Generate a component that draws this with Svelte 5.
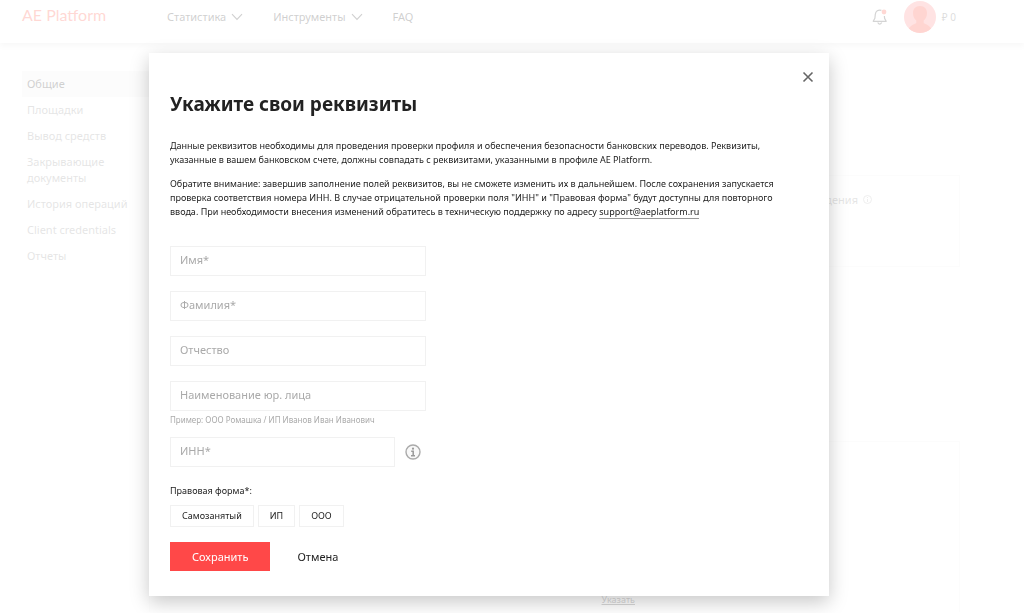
<script>
	let open = true;
	let form = '';

	const menu = ['Статистика', 'Инструменты'];

	const sections = [
		'Общие',
		'Площадки',
		'Вывод средств',
		'Закрывающие документы',
		'История операций',
		'Client credentials',
		'Отчеты'
	];

	const fields = [
		{ id: 'name', label: 'Имя*' },
		{ id: 'surname', label: 'Фамилия*' },
		{ id: 'patronymic', label: 'Отчество' },
		{ id: 'company', label: 'Наименование юр. лица', hint: 'Пример: ООО Ромашка / ИП Иванов Иван Иванович' }
	];

	const forms = ['Самозанятый', 'ИП', 'ООО'];

	const close = () => {
		open = false;
	}
</script>

<header class="top">
	<a class="logo" href="#home">AE Platform</a>
	<nav class="menu">
		{#each menu as item (item)}
			<a href="#menu">
				{item}
				<svg width="12" height="8" viewBox="0 0 12 8"><path d="M1 1.2 6 6.4 11 1.2" fill="none" stroke="currentColor" stroke-width="1.1" /></svg>
			</a>
		{/each}
		<a href="#faq">FAQ</a>
	</nav>
	<div class="user">
		<button class="bell" aria-label="Уведомления">
			<svg width="16" height="18" viewBox="0 0 16 18">
				<path d="M9.4 2.3C6.2 1.4 3.6 3.2 3.3 6.4L2.900 10.200 1.200 13.300H14.200L12.600 10.400 12.400 8" fill="none" stroke="#555" stroke-width="1.200" stroke-linejoin="round" />
				<path d="M5.700 14.500Q7.700 17.600 9.700 14.500" fill="none" stroke="#555" stroke-width="1.300" />
				<circle cx="12" cy="4" r="2.400" fill="#ff6655" />
			</svg>
		</button>
		<svg class="avatar" width="32" height="32" viewBox="0 0 32 32">
			<circle cx="16" cy="16" r="16" fill="#ff9090" />
			<path d="M16 5c4.600 0 7 3 7 7 0 3.600-1.400 6-3.300 7.500v2.300c0 1.200 5.600 1.800 7.400 5.800A16 16 0 0 1 16 32 16 16 0 0 1 4.900 27.600c1.800-4 7.400-4.600 7.400-5.800v-2.300C10.400 18 9 15.600 9 12c0-4 2.400-7 7-7z" fill="#ff5a4a" />
		</svg>
		<span class="balance">₽ 0</span>
	</div>
</header>

<div class="page">
	<aside>
		{#each sections as item, i (item)}
			<a class:active={i === 0} href="#section">{item}</a>
		{/each}
	</aside>
	<main>
		<section class="card">
			<span>Способ подтверждения</span>
			<svg width="9" height="9" viewBox="0 0 9 9"><circle cx="4.500" cy="4.500" r="4" fill="none" stroke="#bbb" /><path d="M4.500 2v1M4.500 4v3" stroke="#bbb" /></svg>
		</section>
		<section class="card details">
			<a href="#details">Указать</a>
		</section>
	</main>
</div>

{#if open}
	<div class="overlay">
		<div class="modal" role="dialog" aria-modal="true" aria-labelledby="title">
			<button class="close" aria-label="Закрыть" on:click={close}>
				<svg width="12" height="12" viewBox="0 0 12 12"><path d="M1.500 1.500 10.500 10.500M10.500 1.500 1.500 10.500" stroke="#666" stroke-width="1.600" /></svg>
			</button>
			<h1 id="title">Укажите свои реквизиты</h1>
			<p>Данные реквизитов необходимы для проведения проверки профиля и обеспечения безопасности банковских переводов. Реквизиты, указанные в вашем банковском счете, должны совпадать с реквизитами, указанными в профиле AE Platform.</p>
			<p>Обратите внимание: завершив заполнение полей реквизитов, вы не сможете изменить их в дальнейшем. После сохранения запускается проверка соответствия номера ИНН. В случае отрицательной проверки поля "ИНН" и "Правовая форма" будут доступны для повторного ввода. При необходимости внесения изменений обратитесь в техническую поддержку по адресу <a href="mailto:support@aeplatform.ru">support@aeplatform.ru</a></p>

			<form on:submit|preventDefault={close}>
				{#each fields as field (field.id)}
					<div class="field">
						<input id={field.id} type="text" placeholder={field.label} aria-label={field.label} />
						{#if field.hint}
							<small>{field.hint}</small>
						{/if}
					</div>
				{/each}
				<div class="field inn">
					<input id="inn" type="text" placeholder="ИНН*" aria-label="ИНН*" />
					<button class="info" type="button" aria-label="Подсказка">
						<svg width="16" height="16" viewBox="0 0 16 16">
							<circle cx="8" cy="8" r="7" fill="#f8f8f8" stroke="#aaa" stroke-width="1.400" />
							<circle cx="8" cy="4.700" r="1.100" fill="#999" />
							<path d="M6.200 7.200H8.200V11.600M6 11.700H10" fill="none" stroke="#999" stroke-width="1.500" />
						</svg>
					</button>
				</div>

				<fieldset>
					<legend>Правовая форма*:</legend>
					<div class="forms">
						{#each forms as item (item)}
							<label class:checked={form === item}>
								<input type="radio" name="form" value={item} bind:group={form} />
								{item}
							</label>
						{/each}
					</div>
				</fieldset>

				<div class="actions">
					<button class="save" type="submit">Сохранить</button>
					<button class="cancel" type="button" on:click={close}>Отмена</button>
				</div>
			</form>
		</div>
	</div>
{/if}

<style>
	:global(body) {
		font-family: "Noto Sans", "Open Sans", sans-serif;
		font-size: 11px;
		color: #222;
		background: #fff;
	}
	a {
		color: inherit;
		text-decoration: none;
	}
	button {
		font: inherit;
		color: inherit;
		padding: 0;
		border: 0;
		background: none;
		cursor: pointer;
	}
	svg {
		display: block;
	}
	.top {
		display: flex;
		align-items: center;
		height: 33px;
		padding: 0 68px 10px 22px;
		box-shadow: 0 3px 6px rgba(0, 0, 0, 0.12);
		color: #444;
	}
	.logo {
		width: 145px;
		font-family: Lato, sans-serif;
		font-size: 16px;
		line-height: 20px;
		padding-bottom: 4px;
		color: #f65;
	}
	.menu {
		display: flex;
		gap: 30px;
	}
	.menu a {
		display: flex;
		align-items: center;
		gap: 5px;
	}
	.user {
		display: flex;
		align-items: center;
		margin-left: auto;
	}
	.avatar {
		margin: 0 6px 0 16px;
	}
	.balance {
		font-size: 10px;
		color: #777;
	}
	.page {
		display: flex;
		padding-top: 28px;
	}
	aside {
		width: 149px;
		padding-left: 22px;
		box-sizing: border-box;
	}
	aside a {
		display: block;
		padding: 5px 20px 5px 5px;
		line-height: 16px;
		color: #999;
	}
	aside .active {
		color: #444;
		background: #f2f2f2;
	}
	main {
		flex: 1;
		margin-right: 64px;
		padding-top: 104px;
	}
	.card {
		display: flex;
		align-items: flex-start;
		justify-content: flex-end;
		gap: 5px;
		min-height: 74px;
		padding: 16px 87px 0 0;
		border: 1px solid #f4f4f4;
		line-height: 16px;
		color: #999;
	}
	.card svg {
		margin-top: 3px;
	}
	.details {
		margin-top: 174px;
		padding: 150px 324px 0 0;
		min-height: 20px;
		border-bottom: 0;
		font-size: 9px;
	}
	.details a {
		text-decoration: underline;
		color: #666;
	}
	.overlay {
		position: fixed;
		inset: 0;
		display: flex;
		justify-content: center;
		align-items: flex-start;
		padding: 53px 46px 0 0;
		background: rgba(255, 255, 255, 0.75);
	}
	.modal {
		position: relative;
		width: 100%;
		max-width: 680px;
		box-sizing: border-box;
		padding: 36px 21px 25px;
		background: #fff;
		box-shadow: 0 6px 18px rgba(0, 0, 0, 0.22);
	}
	.close {
		position: absolute;
		top: 18px;
		right: 15px;
	}
	h1 {
		margin: 0 0 20px;
		font-size: 19px;
		line-height: 30px;
	}
	p {
		max-width: 620px;
		margin: 0 0 10px;
		font-size: 9px;
		line-height: 14px;
	}
	p a {
		border-bottom: 1px solid #999;
	}
	form {
		margin-top: 27px;
	}
	.field {
		max-width: 256px;
		margin-bottom: 15px;
	}
	.field input {
		display: block;
		width: 100%;
		height: 30px;
		box-sizing: border-box;
		padding: 0 9px 4px;
		border: 1px solid #f1f1f1;
		border-radius: 0;
		font: inherit;
		background: #fff;
	}
	.field input::placeholder {
		color: #aaa;
		opacity: 1;
	}
	small {
		display: block;
		margin: 2px 0 -4px;
		font-size: 8px;
		line-height: 13px;
		color: #aaa;
	}
	.inn {
		display: flex;
		align-items: center;
		gap: 10px;
	}
	.info {
		padding: 0 5px 0 0;
	}
	.inn input {
		flex: 1;
	}
	fieldset {
		margin: 0;
		padding: 0;
		border: 0;
	}
	legend {
		padding: 0;
		font-size: 9px;
		line-height: 18px;
	}
	.forms {
		display: flex;
		gap: 4px;
		padding-top: 5px;
	}
	.forms label {
		position: relative;
		padding: 0 11px;
		border: 1px solid #f1f1f1;
		font-size: 9px;
		line-height: 20px;
		cursor: pointer;
	}
	.forms .checked {
		border-color: #ff4848;
	}
	.forms input {
		position: absolute;
		opacity: 0;
		margin: 0;
	}
	.actions {
		display: flex;
		gap: 27px;
		margin-top: 15px;
		line-height: 30px;
	}
	.actions button {
		line-height: 29px;
	}
	.save {
		padding: 0 22px;
		color: #fff;
		background: #ff4848;
	}
</style>
